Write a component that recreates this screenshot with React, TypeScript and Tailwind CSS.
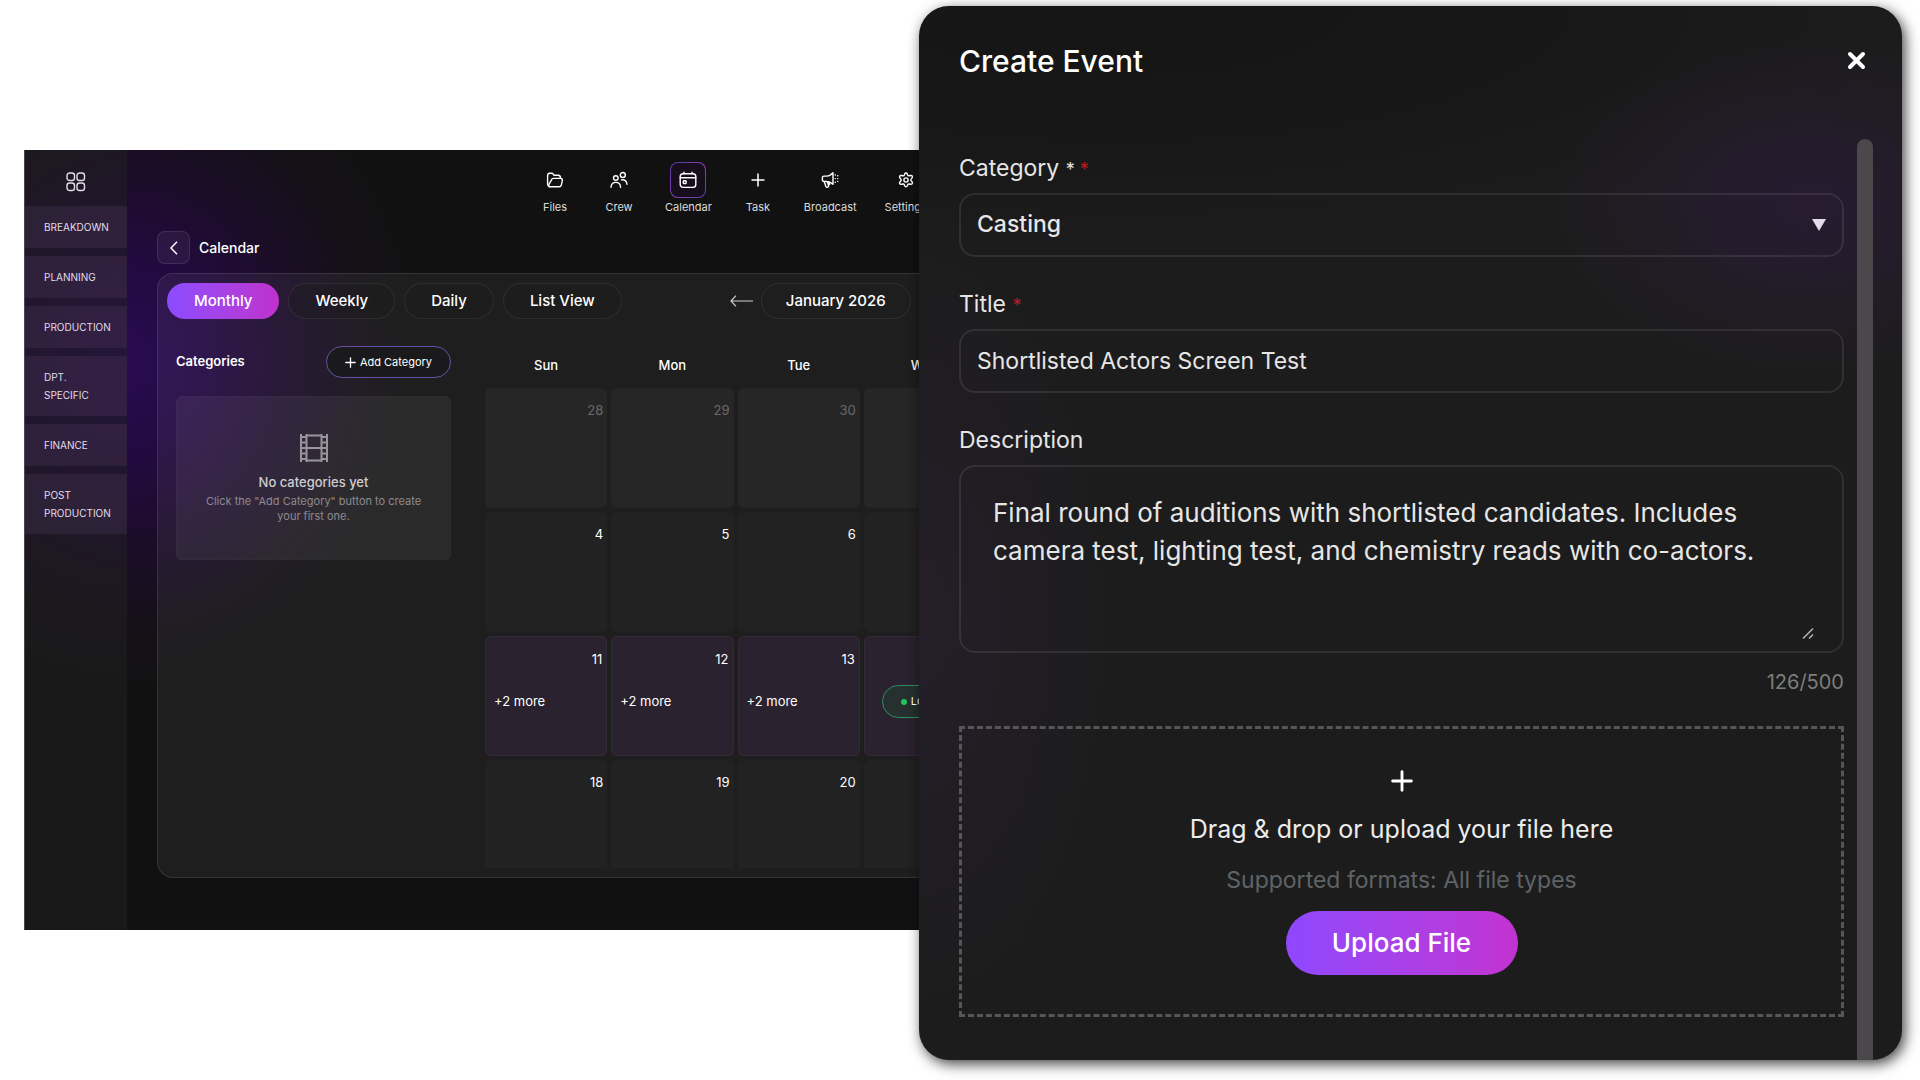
import { useState } from "react";
import type { ReactNode } from "react";

const GridIcon = () => (
  <svg width="20" height="20" viewBox="0 0 20 20" fill="none" stroke="currentColor" strokeWidth="1.4">
    <rect x="1" y="1" width="7.5" height="7.5" rx="2.6" />
    <rect x="11" y="1" width="7.5" height="7.5" rx="2.6" />
    <rect x="1" y="11" width="7.5" height="7.5" rx="2.6" />
    <rect x="11" y="11" width="7.5" height="7.5" rx="2.6" />
  </svg>
);

const FolderIcon = () => (
  <svg width="18" height="18" viewBox="0 0 18 18" fill="none" stroke="currentColor" strokeWidth="1.4" strokeLinejoin="round" strokeLinecap="round">
    <path d="M3.6 15.8C2.3 15.4 1.600 14.500 1.600 13V5c0-1.800.6-2.700 2-2.700h2c.8 0 1.200.3 1.600.9l.7 1h4.200c1.600 0 2.300.8 2.300 2.400v.8" />
    <path d="M5.400 9.200c.3-1.200.9-1.800 2.100-1.800h7c1.500 0 2.100.9 1.800 2.300l-.9 4.100c-.3 1.300-1 2-2.300 2H4.600c-1.500 0-2.200-.9-1.800-2.200z" />
  </svg>
);

const CrewIcon = () => (
  <svg width="18" height="18" viewBox="0 0 18 18" fill="none" stroke="currentColor" strokeWidth="1.4" strokeLinecap="round">
    <circle cx="5.800" cy="7" r="2.300" />
    <path d="M1 16.200c.3-3.200 2-4.800 4.800-4.800s4.500 1.600 4.800 4.800" />
    <circle cx="12.800" cy="4" r="2.500" />
    <path d="M11.400 8.900c3.300-.6 5.300 1.100 5.600 4.400" />
  </svg>
);

const CalendarIcon = () => (
  <svg width="18" height="18" viewBox="0 0 18 18" fill="none" stroke="currentColor" strokeWidth="1.4" strokeLinecap="round">
    <rect x="1.200" y="2.800" width="15.600" height="13.600" rx="2.800" />
    <path d="M1.200 6.800h15.600M5 1.200v1.600M13 1.200v1.600" />
    <rect x="4.300" y="9.700" width="2.800" height="2.800" rx=".6" />
  </svg>
);

const PlusIcon = ({ size, width }: { size: number; width: number }) => (
  <svg width={size} height={size} viewBox="0 0 20 20" fill="none" stroke="currentColor" strokeWidth={width} strokeLinecap="round">
    <path d="M10 1.500v17M1.500 10h17" />
  </svg>
);

const BroadcastIcon = () => (
  <svg width="18" height="18" viewBox="0 0 18 18" fill="none" stroke="currentColor" strokeWidth="1.4" strokeLinejoin="round" strokeLinecap="round">
    <path d="M12 1.800v11.400c-2-1.900-3.900-2.700-6.500-2.700H3c-1 0-1.600-.6-1.600-1.500V6.600c0-.9.6-1.500 1.600-1.500h2.500c2.600 0 4.500-.9 6.500-3.300z" />
    <path d="m3.300 10.700 1.500 4.700c.2.700.6 1 1.300.9l.7-.2c.7-.1.900-.6.700-1.200l-1-4M8 11l.6 2.500" />
    <path d="M14.200 4h.1M14.200 7.600h.1M14.200 11.200h.1M16.700 4.800h.1M16.700 7.600h.1M16.700 10.400h.1" />
  </svg>
);

const GearIcon = () => (
  <svg width="18" height="18" viewBox="0 0 18 18" fill="none" stroke="currentColor" strokeWidth="1.4" strokeLinejoin="round">
    <circle cx="9" cy="9" r="2.100" />
    <path d="M9 1.100q.9 0 1.300 1l.4 1.100q.4.900 1.400.7l1.500-.3q1.200-.2 1.700.7t-.3 1.800l-.9 1.100q-.7.800 0 1.600l.9 1.100q.8 1 .3 1.800t-1.700.7l-1.500-.3q-1-.2-1.400.7l-.4 1.100q-.4 1-1.300 1t-1.300-1l-.4-1.100q-.4-.9-1.400-.7l-1.500.3q-1.200.2-1.700-.7t.3-1.800l.9-1.100q.7-.8 0-1.600l-.9-1.100q-.8-1-.3-1.800t1.700-.7l1.500.3q1 .2 1.400-.7l.4-1.100q.4-1 1.300-1z" transform="translate(0 .9)" />
  </svg>
);

const FilmIcon = () => (
  <svg width="28" height="28" viewBox="0 0 28 28" fill="none" stroke="currentColor" strokeWidth="2">
    <path d="M1 0v28M27 0v28M6.500 0v28M21.500 0v28M6.500 1.500h15M6.500 14h15M6.500 26.500h15" />
    <path d="M1 3h5.500M1 8.500h5.500M1 14h5.500M1 19.500h5.500M1 25h5.500M21.500 3H27M21.500 8.500H27M21.500 14H27M21.500 19.500H27M21.500 25H27" />
  </svg>
);

const phases = ["BREAKDOWN", "PLANNING", "PRODUCTION", "DPT. SPECIFIC", "FINANCE", "POST PRODUCTION"];

const tools: { label: string; icon: ReactNode }[] = [
  { label: "Files", icon: <FolderIcon /> },
  { label: "Crew", icon: <CrewIcon /> },
  { label: "Calendar", icon: <CalendarIcon /> },
  { label: "Task", icon: <PlusIcon size={14} width={2.2} /> },
  { label: "Broadcast", icon: <BroadcastIcon /> },
  { label: "Settings", icon: <GearIcon /> },
];

const views = ["Monthly", "Weekly", "Daily", "List View"];
const weekdays = ["Sun", "Mon", "Tue", "Wed"];
const weeks = [
  [28, 29, 30, 31],
  [4, 5, 6, 7],
  [11, 12, 13, 14],
  [18, 19, 20, 21],
];

function Sidebar() {
  return (
    <nav aria-label="Phases" className="w-[103px] shrink-0 border-l border-white/20 bg-[#222222]/50 text-[#e2dde8]">
      <button aria-label="Dashboard" className="flex h-14 w-full items-center justify-center pt-2">
        <GridIcon />
      </button>
      <ul className="flex flex-col gap-2">
        {phases.map((p) => (
          <li key={p}>
            <a href="#" className="block bg-[#6a4a78]/20 py-3 pr-4 pl-[19px] text-[10px] leading-[18px]">
              {p}
            </a>
          </li>
        ))}
      </ul>
    </nav>
  );
}

function Toolbar() {
  return (
    <nav aria-label="Tools" className="ml-[410px] flex gap-7 pt-3">
      {tools.map((t) => (
        <button key={t.label} className="flex min-w-9 flex-col items-center text-[11px] leading-[18px] text-[#dcdcdc]">
          {t.label === "Calendar" ? (
            <span className="rounded-lg bg-linear-to-br from-[#4c3a9c] via-[#8b3fb8] to-[#5b3fa8] p-px text-white">
              <span className="flex size-[34px] items-center justify-center rounded-[7px] bg-[#170d1d]">{t.icon}</span>
            </span>
          ) : (
            <span className="flex size-9 items-center justify-center text-white">{t.icon}</span>
          )}
          {t.label}
        </button>
      ))}
    </nav>
  );
}

function Categories() {
  return (
    <section className="w-[275px] shrink-0">
      <div className="flex items-center justify-between">
        <h2 className="text-[13px] font-semibold text-white">Categories</h2>
        <button className="flex h-8 items-center gap-1 rounded-full border border-[#6650a8] bg-[#1a1a1c] px-[18px] text-[11px] text-white">
          <PlusIcon size={11} width={2.4} />
          Add Category
        </button>
      </div>
      <div className="mt-[18px] flex h-[164px] flex-col items-center rounded-md border border-white/[0.02] bg-white/[0.055] px-4 pt-[37px] text-center">
        <span className="text-[#99959c]">
          <FilmIcon />
        </span>
        <p className="mt-3 text-[13px] leading-4 font-medium text-[#cfcdd0]">No categories yet</p>
        <p className="mt-1 text-[11px] leading-[15px] text-[#8d8a8f]">Click the "Add Category" button to create your first one.</p>
      </div>
    </section>
  );
}

function MonthGrid() {
  return (
    <div className="h-[524px] overflow-hidden">
      <table className="w-[509px] table-fixed border-separate border-spacing-1 text-[13px] text-white">
        <thead>
          <tr>
            {weekdays.map((d) => (
              <th key={d} className="h-9 p-0 font-medium">
                {d}
              </th>
            ))}
          </tr>
        </thead>
        <tbody>
          {weeks.map((week, w) => (
            <tr key={week[0]}>
              {week.map((day) => {
                const tone =
                  w === 0
                    ? "bg-[#262626] text-[#6a6a6a]"
                    : w === 2
                      ? "bg-[#2a222e] border border-white/[0.04]"
                      : "bg-[#222222]";
                return (
                  <td key={day} className={`h-[120px] rounded-md p-0 align-top ${tone}`}>
                    <div className="flex flex-col pt-3">
                      <span className="pr-1 text-right leading-5">{day}</span>
                      {w === 2 && day < 14 && (
                        <button className="mt-[22px] self-start pl-2 leading-5">+2 more</button>
                      )}
                      {day === 14 && (
                        <button className="mt-4 ml-[17px] flex h-[33px] items-center gap-1 rounded-full border border-[#2f8f5f] bg-[#26302f] pl-[18px] text-[11px]">
                          <span className="size-[6px] rounded-full bg-[#22c55e]" />
                          Location
                        </button>
                      )}
                    </div>
                  </td>
                );
              })}
            </tr>
          ))}
        </tbody>
      </table>
    </div>
  );
}

function CalendarWindow() {
  const [view, setView] = useState("Monthly");
  return (
    <main className="flex min-w-0 flex-1 overflow-hidden bg-[#111111] bg-[radial-gradient(ellipse_310px_350px_at_105px_210px,#290b50_0%,#230a42_25%,#1b0d27_55%,#141115_80%,#111111_100%)]">
      <Sidebar />
      <div className="min-w-[1000px] flex-1 pb-[52px]">
        <Toolbar />
        <header className="mt-[15px] ml-[30px] flex items-center gap-[9px]">
          <button aria-label="Back" className="flex size-[33px] items-center justify-center rounded-lg border border-white/10 bg-white/5 text-white">
            <svg width="8" height="14" viewBox="0 0 8 14" fill="none" stroke="currentColor" strokeWidth="1.500">
              <path d="M7 .8 1 7l6 6.200" />
            </svg>
          </button>
          <h1 className="text-[14px] font-medium text-white">Calendar</h1>
        </header>
        <div className="mt-[9px] ml-[30px] h-[605px] rounded-2xl border border-white/10 bg-white/[0.055]">
          <div className="flex items-center px-[9px] pt-[9px] text-[15px] font-medium text-white">
            <div className="flex gap-[9px]">
              {views.map((v) => (
                <button
                  key={v}
                  onClick={() => setView(v)}
                  className={
                    v === view
                      ? "h-9 rounded-full bg-linear-to-r from-[#8c4bff] to-[#c030cc] px-[27px]"
                      : "h-9 rounded-full border border-white/[0.07] bg-[#1b1b1b]/40 px-[26px]"
                  }
                >
                  {v}
                </button>
              ))}
            </div>
            <button aria-label="Previous month" className="ml-[108px] text-[#d0d0d0]">
              <svg width="23" height="12" viewBox="0 0 23 12" fill="none" stroke="currentColor" strokeWidth="1.200">
                <path d="M23 6H1M6 .7 1 6l5 5.300" />
              </svg>
            </button>
            <button className="ml-2 h-9 rounded-full border border-white/[0.07] px-6">January 2026</button>
          </div>
          <div className="flex gap-[30px] pt-[25px] pl-[18px]">
            <div className="pt-[2px]">
              <Categories />
            </div>
            <MonthGrid />
          </div>
        </div>
      </div>
    </main>
  );
}

const fieldBox = "rounded-2xl border-2 border-white/[0.09] bg-transparent outline-none";

function EventDialog() {
  const [description, setDescription] = useState(
    "Final round of auditions with shortlisted candidates. Includes camera test, lighting test, and chemistry reads with co-actors.",
  );
  return (
    <section
      role="dialog"
      aria-labelledby="dialog-title"
      className="relative z-10 mr-[18px] mb-[15px] w-[983px] shrink-0 overflow-hidden rounded-[30px] bg-[#1c1c1c] bg-[radial-gradient(ellipse_260px_170px_at_890px_200px,#281b31_0%,#231c29_45%,transparent_100%),radial-gradient(ellipse_200px_400px_at_0_620px,#241e29_0%,transparent_100%),radial-gradient(ellipse_800px_240px_at_200px_0,#151515_0%,#171717_50%,transparent_100%)] text-[#e6e6e6] shadow-[3px_4px_14px_rgba(0,0,0,0.75)]"
    >
      <header className="flex h-[133px] items-start justify-between pt-[37px] pr-[36px] pl-10">
        <h2 id="dialog-title" className="text-[30px] leading-9 font-medium text-white">
          Create Event
        </h2>
        <button aria-label="Close" className="flex h-9 items-center text-white">
          <svg width="19" height="19" viewBox="0 0 19 19" stroke="currentColor" strokeWidth="4" strokeLinecap="round">
            <path d="m3 3 13 13M16 3 3 16" />
          </svg>
        </button>
      </header>
      <div className="flex gap-[13px] pr-[29px] pl-10">
        <form className="flex min-w-0 flex-1 flex-col gap-[31px] pt-[13px] pb-[43px]" onSubmit={(e) => e.preventDefault()}>
          <div className="flex flex-col gap-[9px]">
            <label htmlFor="category" className="text-[23px] leading-8">
              Category <span className="text-lg">* <span className="text-[#b91c1c]">*</span></span>
            </label>
            <div className="relative">
              <select id="category" className={`h-16 w-full appearance-none px-4 text-[23px] font-medium ${fieldBox}`}>
                <option>Casting</option>
              </select>
              <svg className="pointer-events-none absolute top-[26px] right-[18px]" width="14" height="12" viewBox="0 0 14 12" fill="#e4dce8">
                <path d="M0 0h14L7 12z" />
              </svg>
            </div>
          </div>
          <div className="flex flex-col gap-[9px]">
            <label htmlFor="title" className="text-[23px] leading-8">
              Title <span className="text-lg text-[#b91c2c]">*</span>
            </label>
            <input id="title" defaultValue="Shortlisted Actors Screen Test" className={`h-16 w-full px-4 text-[23px] ${fieldBox}`} />
          </div>
          <div className="flex flex-col gap-[9px]">
            <label htmlFor="description" className="text-[23px] leading-8">
              Description
            </label>
            <div className={`relative h-[188px] py-[27px] pr-7 pl-8 ${fieldBox}`}>
              <textarea
                id="description"
                value={description}
                maxLength={500}
                onChange={(e) => setDescription(e.target.value)}
                className="block h-full w-full resize-none overflow-hidden bg-transparent text-[26px] leading-[38px] outline-none"
              />
              <svg className="pointer-events-none absolute right-7 bottom-3" width="12" height="12" viewBox="0 0 12 12" stroke="#b0b0b0" strokeWidth="1.600">
                <path d="M1 11.500 11 1.500M7 11.500l4-4" />
              </svg>
            </div>
            <p className="text-right text-[20px] leading-10 text-[#7d7d7d]">126/500</p>
          </div>
          <div className="-mt-[7px] flex h-[291px] flex-col items-center border-[3px] border-dashed border-[#565656] pt-[41px]">
            <span className="text-white">
              <PlusIcon size={22} width={2.6} />
            </span>
            <p className="mt-[18px] text-[25px] leading-[38px] text-[#ececec]">Drag &amp; drop or upload your file here</p>
            <p className="mt-4 text-[23px] leading-8 text-[#5f6366]">Supported formats: All file types</p>
            <button className="mt-[15px] h-16 w-[232px] shrink-0 rounded-full bg-linear-to-r from-[#8f47ff] to-[#c232d0] text-[26px] font-medium text-white">
              Upload File
            </button>
          </div>
        </form>
        <div className="w-4 rounded-t-lg bg-[#4a484b]" />
      </div>
    </section>
  );
}

export default function App() {
  return (
    <div className="flex min-h-screen items-center overflow-hidden bg-white pl-6 font-['Inter',sans-serif]">
      <CalendarWindow />
      <EventDialog />
    </div>
  );
}
